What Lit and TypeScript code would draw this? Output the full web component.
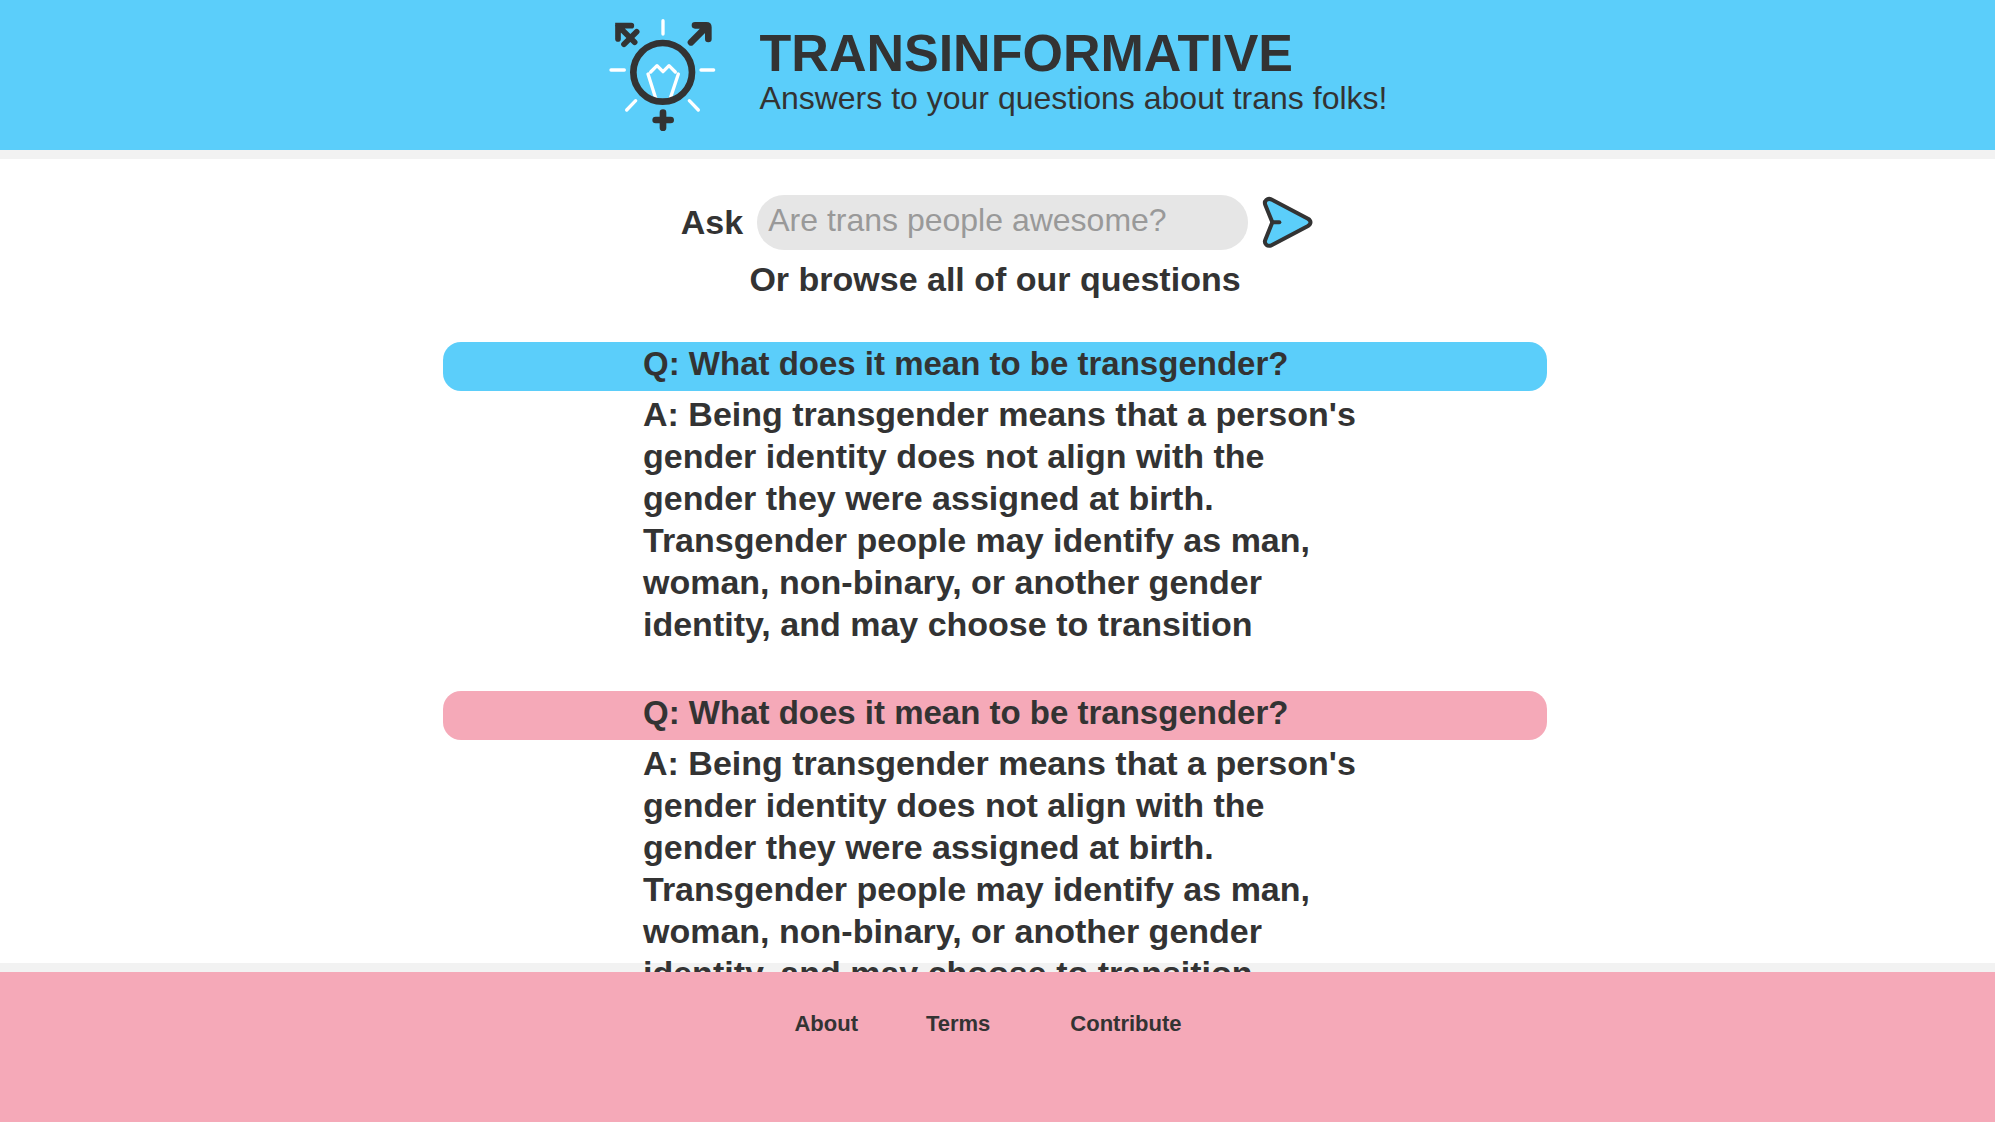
import { LitElement, html, css } from "lit";
import { customElement, property, state } from "lit/decorators.js";

interface Entry {
  tone: "blue" | "pink";
  question: string;
  answer: string;
}

const QUESTION = "Q: What does it mean to be transgender?";
const ANSWER =
  "A: Being transgender means that a person's gender identity does not align with the gender they were assigned at birth. Transgender people may identify as man, woman, non-binary, or another gender identity, and may choose to transition";

const ENTRIES: Entry[] = [
  { tone: "blue", question: QUESTION, answer: ANSWER },
  { tone: "pink", question: QUESTION, answer: ANSWER },
];

@customElement("site-header")
export class SiteHeader extends LitElement {
  static styles = css`
    :host {
      display: block;
      background: #5bcefa;
    }
    .bar {
      display: flex;
      justify-content: center;
      align-items: center;
      gap: 44px;
      padding: 18px;
    }
    .logo {
      width: 108px;
      height: 114px;
      flex: none;
    }
    .titles {
      padding-bottom: 8px;
    }
    .title,
    .tagline {
      margin: 0;
    }
    .title {
      font-size: 52px;
      line-height: 54px;
      font-weight: bold;
    }
    .tagline {
      font-size: 32px;
      line-height: 36px;
    }
  `;

  render() {
    return html`
      <header class="bar">
        <svg class="logo" viewBox="24 24 324 342" fill="none" stroke-linecap="round" aria-hidden="true">
          <g stroke="#fff" stroke-width="10">
            <path d="M189 32V72M33 180H73M303 180H341M107 272L80 300M268 272L295 300" />
            <path d="M152 186L171 167L189 185L207 167L226 186M144 192L168 268M235 192L210 268" stroke-linejoin="round" />
          </g>
          <g stroke="#333">
            <circle cx="188" cy="187" r="88" stroke-width="20" />
            <path d="M189 308V353M167 330H212" stroke-width="20" />
            <path d="M273 97L323 47M285 46H319Q325 46 325 52V87" stroke-width="20" />
            <path d="M54 87V47H94M54 47L104 97M110 65L72 103" stroke-width="17" />
          </g>
        </svg>
        <div class="titles">
          <h1 class="title">TRANSINFORMATIVE</h1>
          <p class="tagline">Answers to your questions about trans folks!</p>
        </div>
      </header>
    `;
  }
}

@customElement("ask-form")
export class AskForm extends LitElement {
  static styles = css`
    :host {
      display: block;
    }
    .form {
      display: flex;
      justify-content: center;
      align-items: center;
      gap: 14px;
    }
    .label {
      padding-bottom: 2px;
      font-size: 34px;
      line-height: 42px;
      font-weight: bold;
    }
    .input {
      box-sizing: border-box;
      width: 491px;
      height: 55px;
      min-width: 0;
      border: 0;
      border-radius: 27px;
      padding: 0 11px 5px;
      background: #e6e6e6;
      color: #333;
      font: 32px "Liberation Sans", Arial, sans-serif;
    }
    .input::placeholder {
      color: #999;
      opacity: 1;
    }
    .send {
      display: flex;
      border: 0;
      padding: 0;
      background: none;
      cursor: pointer;
    }
    .icon {
      width: 52px;
      height: 54px;
    }
  `;

  @state() private query = "";

  private onInput(event: Event) {
    this.query = (event.target as HTMLInputElement).value;
  }

  private onSubmit(event: Event) {
    event.preventDefault();
    this.dispatchEvent(new CustomEvent("ask", { detail: this.query }));
  }

  render() {
    return html`
      <form class="form" @submit=${this.onSubmit}>
        <label class="label" for="query">Ask</label>
        <input
          class="input"
          id="query"
          type="text"
          placeholder="Are trans people awesome?"
          .value=${this.query}
          @input=${this.onInput}
        />
        <button class="send" type="submit" aria-label="Send">
          <svg class="icon" viewBox="66 33 156 162" fill="#5bcefa" stroke="#333" stroke-width="12" stroke-linecap="round" stroke-linejoin="round">
            <path d="M97 112L76 60C71 48 82 37 96 44L204 101C214 107 214 117 204 123L96 180C82 187 71 176 76 164Z" />
            <path d="M97 112H118" />
          </svg>
        </button>
      </form>
    `;
  }
}

@customElement("question-entry")
export class QuestionEntry extends LitElement {
  static styles = css`
    :host {
      display: block;
    }
    .question,
    .answer {
      margin: 0;
      font-weight: bold;
      line-height: 42px;
    }
    .question {
      padding: 1px 200px 6px;
      border-radius: 18px;
      font-size: 33px;
    }
    .blue {
      background: #5bcefa;
    }
    .pink {
      background: #f5a9b8;
    }
    .answer {
      max-width: 720px;
      padding: 2px 0 0 200px;
      font-size: 34px;
    }
  `;

  @property({ attribute: false }) entry!: Entry;

  render() {
    const { tone, question, answer } = this.entry;
    return html`
      <h2 class="question ${tone}">${question}</h2>
      <p class="answer">${answer}</p>
    `;
  }
}

@customElement("site-footer")
export class SiteFooter extends LitElement {
  static styles = css`
    :host {
      display: block;
      background: #f5a9b8;
    }
    .links {
      display: flex;
      justify-content: center;
      gap: 68px;
      padding: 39px 19px 85px 0;
    }
    .link {
      color: inherit;
      font-size: 22px;
      line-height: 26px;
      font-weight: bold;
      text-decoration: none;
    }
    .link:last-child {
      margin-left: 12px;
    }
  `;

  render() {
    return html`
      <footer>
        <nav class="links">
          ${["About", "Terms", "Contribute"].map(
            (name) => html`<a class="link" href="#${name.toLowerCase()}">${name}</a>`,
          )}
        </nav>
      </footer>
    `;
  }
}

@customElement("app-root")
export class AppRoot extends LitElement {
  static styles = css`
    :host {
      display: flex;
      flex-direction: column;
      height: 100vh;
      background: #fff;
      color: #333;
      font-family: "Liberation Sans", Arial, sans-serif;
    }
    .content {
      flex: 1;
      min-height: 0;
      overflow-y: auto;
      scrollbar-width: none;
      padding-top: 45px;
      box-shadow: inset 0 9px #f2f2f2, inset 0 -9px #f2f2f2;
    }
    .browse {
      margin: 8px 5px 42px 0;
      text-align: center;
      font-size: 34px;
      line-height: 42px;
      font-weight: bold;
    }
    .entries {
      display: flex;
      flex-direction: column;
      gap: 46px;
      max-width: 1104px;
      margin: 0 auto;
      padding-right: 5px;
    }
  `;

  render() {
    return html`
      <site-header></site-header>
      <main class="content">
        <ask-form></ask-form>
        <p class="browse">Or browse all of our questions</p>
        <div class="entries">
          ${ENTRIES.map((entry) => html`<question-entry .entry=${entry}></question-entry>`)}
        </div>
      </main>
      <site-footer></site-footer>
    `;
  }
}
